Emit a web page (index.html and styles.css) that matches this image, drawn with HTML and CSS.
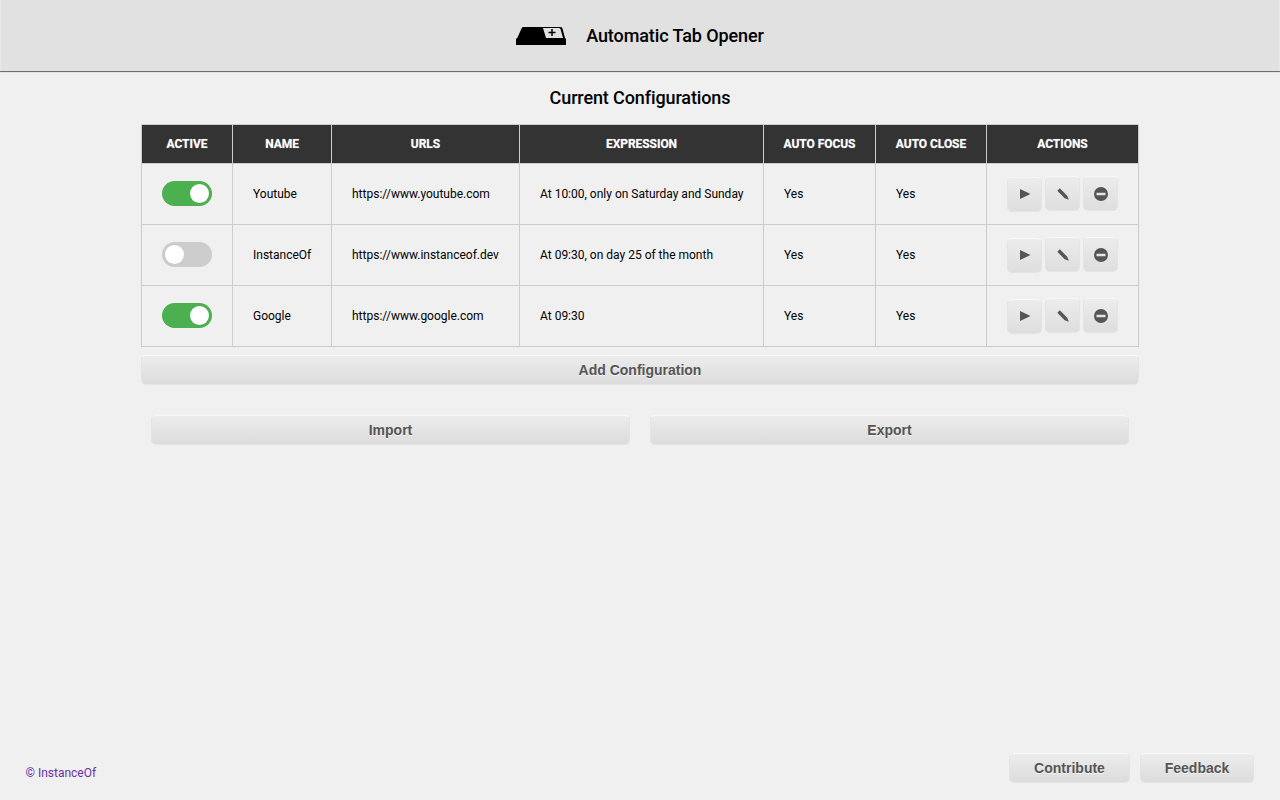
FILE: index.html
```html
<!DOCTYPE html>
<html lang="en">
<head>
<meta charset="utf-8">
<title>Automatic Tab Opener</title>
<link rel="stylesheet" href="styles.css">
</head>
<body>
<header class="topbar">
  <svg class="logo" width="50" height="18" viewBox="0 0 50 18"><path fill-rule="evenodd" d="M7 0H45Q46 0 46.500 1.500L49 11L50 12V18H0V12L1.500 10.500L5.500 1.500Q6 0 7 0ZM27 1L30 11H47L44.500 2Q44 1 43 1Z" fill="#000"/><path d="M36 2v7M32.500 5.500h7" stroke="#000" stroke-width="1.500" fill="none"/></svg>
  <h1 class="app-title">Automatic Tab Opener</h1>
</header>
<main class="content">
  <h2 class="section-title">Current Configurations</h2>
  <table class="config-table">
    <colgroup><col class="c1"><col class="c2"><col class="c3"><col class="c4"><col class="c5"><col class="c6"><col class="c7"></colgroup>
    <thead>
      <tr><th>Active</th><th>Name</th><th>URLs</th><th>Expression</th><th>Auto Focus</th><th>Auto Close</th><th>Actions</th></tr>
    </thead>
    <tbody>
      <tr>
        <td class="center"><span class="toggle on"><span class="knob"></span></span></td>
        <td>Youtube</td><td>https://www.youtube.com</td><td>At 10:00, only on Saturday and Sunday</td><td>Yes</td><td>Yes</td>
        <td class="center"><div class="actions">
          <button class="icon-btn first"><svg width="12" height="12" viewBox="0 0 12 12"><path d="M1 1L11.500 6L1 11Z"/></svg></button>
          <button class="icon-btn"><svg width="12" height="12" viewBox="0 0 12 12"><path d="M.3 2.800L2.800 .3L10.200 7.700L11.800 11.800L7.700 10.200Z"/></svg></button>
          <button class="icon-btn"><svg width="14" height="14" viewBox="0 0 14 14"><path fill-rule="evenodd" d="M7 0a7 7 0 1 0 0 14A7 7 0 0 0 7 0ZM2.500 5.700h9v2.600h-9Z"/></svg></button>
        </div></td>
      </tr>
      <tr>
        <td class="center"><span class="toggle"><span class="knob"></span></span></td>
        <td>InstanceOf</td><td>https://www.instanceof.dev</td><td>At 09:30, on day 25 of the month</td><td>Yes</td><td>Yes</td>
        <td class="center"><div class="actions">
          <button class="icon-btn first"><svg width="12" height="12" viewBox="0 0 12 12"><path d="M1 1L11.500 6L1 11Z"/></svg></button>
          <button class="icon-btn"><svg width="12" height="12" viewBox="0 0 12 12"><path d="M.3 2.800L2.800 .3L10.200 7.700L11.800 11.800L7.700 10.200Z"/></svg></button>
          <button class="icon-btn"><svg width="14" height="14" viewBox="0 0 14 14"><path fill-rule="evenodd" d="M7 0a7 7 0 1 0 0 14A7 7 0 0 0 7 0ZM2.500 5.700h9v2.600h-9Z"/></svg></button>
        </div></td>
      </tr>
      <tr>
        <td class="center"><span class="toggle on"><span class="knob"></span></span></td>
        <td>Google</td><td>https://www.google.com</td><td>At 09:30</td><td>Yes</td><td>Yes</td>
        <td class="center"><div class="actions">
          <button class="icon-btn first"><svg width="12" height="12" viewBox="0 0 12 12"><path d="M1 1L11.500 6L1 11Z"/></svg></button>
          <button class="icon-btn"><svg width="12" height="12" viewBox="0 0 12 12"><path d="M.3 2.800L2.800 .3L10.200 7.700L11.800 11.800L7.700 10.200Z"/></svg></button>
          <button class="icon-btn"><svg width="14" height="14" viewBox="0 0 14 14"><path fill-rule="evenodd" d="M7 0a7 7 0 1 0 0 14A7 7 0 0 0 7 0ZM2.500 5.700h9v2.600h-9Z"/></svg></button>
        </div></td>
      </tr>
    </tbody>
  </table>
  <button class="btn add-btn">Add Configuration</button>
  <div class="io-row">
    <button class="btn">Import</button>
    <button class="btn">Export</button>
  </div>
</main>
<footer class="footer">
  <span class="copyright">© InstanceOf</span>
  <div class="footer-actions">
    <button class="btn contribute">Contribute</button>
    <button class="btn feedback">Feedback</button>
  </div>
</footer>
</body>
</html>
```
FILE: styles.css
```css
* { box-sizing: border-box; }
html, body { height: 100%; }
body {
  margin: 0;
  height: 800px;
  overflow: hidden;
  background: #f0f0f0;
  color: #000;
  font-family: Roboto, "Liberation Sans", sans-serif;
  display: flex;
  flex-direction: column;
}
.topbar {
  height: 72px;
  flex: none;
  display: flex;
  align-items: center;
  justify-content: center;
  gap: 20px;
  background: #e1e1e1;
  border-bottom: 1px solid #6f6f6f;
  box-shadow: inset 1px 0 0 #e8e8e8, inset -1px 0 0 #e8e8e8, 0 1px 0 #e2e2e2;
}
.logo { display: block; }
.app-title {
  margin: 0;
  font-size: 18px;
  font-weight: 500;
  line-height: 24px;
  letter-spacing: -.1px;
}
.content {
  flex: 1;
  width: 998px;
  margin: 0 auto 0 141px;
  display: flex;
  flex-direction: column;
}
.section-title {
  margin: 0;
  height: 52px;
  padding-top: 14px;
  font-size: 18px;
  line-height: 24px;
  font-weight: 500;
  letter-spacing: -.12px;
  text-align: center;
}
.config-table {
  width: 998px;
  table-layout: fixed;
  border-collapse: collapse;
  font-size: 12px;
}
.c1 { width: 91px; }
.c2 { width: 99px; }
.c3 { width: 188px; }
.c4 { width: 244px; }
.c5 { width: 112px; }
.c6 { width: 111px; }
.c7 { width: 152px; }
th {
  height: 39px;
  padding: 0;
  background: #333;
  color: #fff;
  font-size: 12px;
  font-weight: 700;
  letter-spacing: -.05px;
  text-shadow: 0 0 1px rgba(255, 255, 255, .5);
  text-transform: uppercase;
  text-align: center;
  border: 1px solid #ccc;
}
td {
  height: 61px;
  padding: 0 20px;
  border: 1px solid #ccc;
  line-height: 16px;
  white-space: nowrap;
}
td.center { padding: 0 0 1px; text-align: center; }
.toggle {
  width: 50px;
  height: 25px;
  margin: 0 auto;
  padding: 3px;
  border-radius: 13px;
  background: #ccc;
  display: flex;
  justify-content: flex-start;
}
.toggle.on { background: #4caf50; justify-content: flex-end; }
.knob {
  width: 19px;
  height: 19px;
  border-radius: 50%;
  background: #fff;
}
.actions {
  display: flex;
  justify-content: center;
  align-items: flex-start;
  gap: 3px;
}
.icon-btn {
  width: 35px;
  height: 35px;
  padding: 1px 0 0;
  display: flex;
  align-items: center;
  justify-content: center;
  border: 1px solid #e4e4e4;
  border-top-color: #f8f8f8;
  border-radius: 5px;
  background: linear-gradient(#ececec, #dedede);
  fill: #555;
}
.icon-btn.first { margin-top: 1px; padding: 0; }
.btn {
  height: 30px;
  padding: 0;
  border: 1px solid #e4e4e4;
  border-top-color: #f8f8f8;
  border-radius: 5px;
  background: linear-gradient(#ececec, #dcdcdc);
  color: #555;
  font-family: "Liberation Sans", Arial, sans-serif;
  font-size: 14px;
  font-weight: 700;
  text-shadow: 0 1px 0 #f5f5f5;
  line-height: 1;
}
.add-btn { width: 998px; margin-top: 8px; flex: none; }
.io-row {
  display: flex;
  gap: 20px;
  padding: 0 10px;
  margin-top: 30px;
}
.io-row .btn { flex: 1; }
.footer {
  height: 64px;
  flex: none;
  display: flex;
  align-items: flex-start;
  justify-content: space-between;
  padding: 17px 26px 0 25.500px;
}
.copyright {
  margin-top: 12px;
  font-size: 12px;
  line-height: 16px;
  color: #6a2fa8;
}
.footer-actions { display: flex; gap: 10px; }
.contribute { width: 121px; }
.feedback { width: 114px; }
```
